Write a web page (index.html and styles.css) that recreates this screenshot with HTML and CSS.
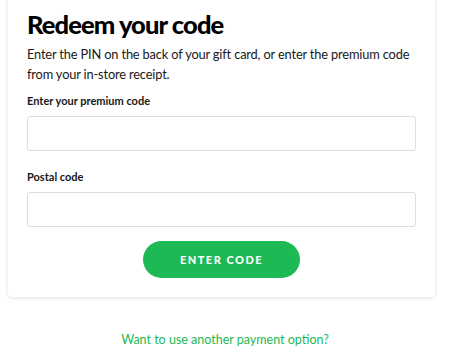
FILE: index.html
```html
<!DOCTYPE html>
<html lang="en">
<head>
  <meta charset="UTF-8">
  <meta name="viewport" content="width=device-width, initial-scale=1.0">
  <title>Redeem your code</title>
  <link rel="stylesheet" href="styles.css">
</head>
<body>
  <div class="card">
    <h1>Redeem your code</h1>
    <p class="intro">Enter the PIN on the back of your gift card, or enter the premium code from your in-store receipt.</p>

    <label class="field">
      <span>Enter your premium code</span>
      <input type="text">
    </label>

    <label class="field">
      <span>Postal code</span>
      <input type="text">
    </label>

    <div class="actions">
      <button>Enter code</button>
    </div>
  </div>

  <a class="other" href="#">Want to use another payment option?</a>
</body>
</html>
```

FILE: styles.css
```css
body {
  margin: 0;
  background: #fff;
  color: #000;
  font-family: Lato, "Liberation Sans", sans-serif;
}
.card {
  margin: -10px 15px 0 8px;
  padding: 14px 19px 19px;
  background: #fff;
  border-radius: 4px;
  box-shadow: 0 1px 4px rgba(0,0,0,0.12);
}
h1 {
  margin: 0;
  font-size: 25.5px;
  font-weight: 900;
  letter-spacing: -0.9px;
  line-height: 40px;
}
.intro {
  margin: 0 0 10px;
  font-size: 12.8px;
  letter-spacing: -0.15px;
  line-height: 20px;
  color: #181818;
}
.field {
  display: block;
  margin-bottom: 19px;
}
.field span {
  display: block;
  font-size: 11px;
  font-weight: 700;
  margin-bottom: 9px;
  color: #181818;
}
.field input {
  display: block;
  box-sizing: border-box;
  width: 100%;
  height: 35px;
  border: 1px solid #dedede;
  border-radius: 3px;
  font-size: 14px;
}
.actions {
  text-align: center;
  margin-top: -5px;
}
button {
  width: 157px;
  height: 37px;
  border: none;
  border-radius: 19px;
  background: #1db954;
  color: #fff;
  font-family: inherit;
  font-size: 11px;
  font-weight: 900;
  letter-spacing: 1.5px;
  text-transform: uppercase;
  cursor: pointer;
}
.other {
  display: block;
  margin-top: 35px;
  text-align: center;
  color: #1db954;
  font-size: 12.5px;
  text-decoration: none;
}
```
